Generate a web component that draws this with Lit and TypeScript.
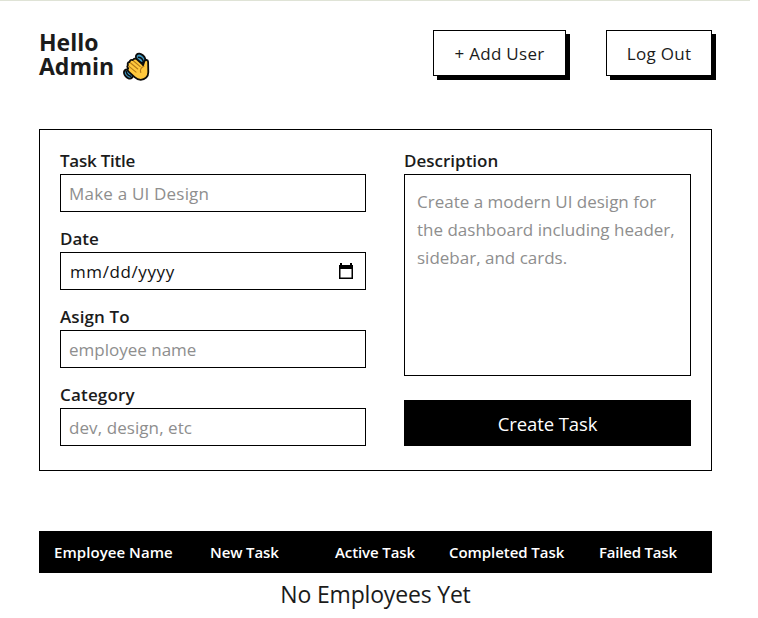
import { LitElement, html, svg, css } from "lit";
import { customElement } from "lit/decorators.js";
import { styleMap } from "lit/directives/style-map.js";

const wave = svg`
  <g fill="#3f9cc6" stroke="#0c0c0c" stroke-width="2">
    <ellipse cx="17.6" cy="5.200" rx="5.300" ry="3.700" transform="rotate(42 17.6 5.200)"/>
    <ellipse cx="5.400" cy="21" rx="5.200" ry="3.600" transform="rotate(48 5.400 21)"/>
  </g>
  <g fill="none" stroke="#0c0c0c" stroke-width="1.500">
    <path d="M14.800 4.200c2.800 0 5 1.800 5.600 4.600M3.200 17.800c.1 3 1.900 5 5 5.600"/>
  </g>
  <path fill="#ffc83d" stroke="#0c0c0c" stroke-width="1.800" stroke-linejoin="round"
    d="M6.600 9c.3-1.900 1.800-2.700 3.400-1.900.9-1.600 2.700-1.800 3.900-.8l5 4.400 1.200 1.500 1.300-4.100c.7-1.700 3.600-1.400 3.700.6l.2 10.500c0 4.600-3.300 7.600-7.600 7.600-2.500 0-4.300-.9-6.100-2.600l-6-5.600c-1.200-1.100-1.300-2.400-.4-3.300-1.300-1.100-1.100-2.500-.2-3.200-.9-1.400-.2-2.800 1.600-3.100z"/>
  <path fill="none" stroke="#b47a17" stroke-width="1.100" stroke-linecap="round"
    d="M10.600 8l6.600 5.600M7.600 10l7.200 6M6 13.400l7 5.800M21 13.200c-3 1-4.200 3.400-3.200 6.300"/>`;

interface Column {
  label: string;
  width: number;
  spacing: number;
}

const columns: Column[] = [
  { label: "Employee Name", width: 156, spacing: 0.06 },
  { label: "New Task", width: 125, spacing: -0.1 },
  { label: "Active Task", width: 114, spacing: -0.1 },
  { label: "Completed Task", width: 150, spacing: -0.06 },
  { label: "Failed Task", width: 100, spacing: -0.2 },
];

@customElement("app-root")
export class AppRoot extends LitElement {
  static styles = css`
    :host {
      display: block;
      height: 618px;
      overflow: hidden;
      background: #fff;
      color: #1b1b1b;
      font-family: "Open Sans", "Noto Sans", sans-serif;
      font-size: 17px;
    }
    * { box-sizing: border-box; }
    .strip { width: 750px; height: 1px; background: #dfe3d6; }
    .page { padding: 29px 46px 0 39px; }
    .header { display: flex; justify-content: space-between; height: 50px; }
    h1 { margin: 0; font-size: 23px; line-height: 24px; font-weight: 700; }
    .line { display: flex; align-items: flex-start; }
    .wave { width: 28px; height: 28px; margin: -1px 0 0 9px; flex: none; overflow: visible; }
    .actions { display: flex; gap: 40px; }
    button {
      font: inherit; color: inherit; margin: 0; padding: 0; height: 46px;
      border: 1px solid #000; background: #fff; white-space: nowrap;
    }
    .action { box-shadow: 4px 4px 0 #000; letter-spacing: 0.3px; }
    .add { width: 133px; }
    .logout { width: 106px; }
    .form {
      display: flex; justify-content: space-between; margin-top: 49px;
      height: 342px; padding: 20px; border: 1px solid #000;
    }
    .left { width: 306px; display: flex; flex-direction: column; gap: 16px; }
    .right { width: 287px; }
    .field { display: block; }
    .label { display: block; height: 24px; line-height: 22px; font-weight: 600; font-size: 17px; }
    input, .date {
      display: flex; align-items: center; justify-content: space-between;
      width: 100%; height: 38px; padding: 0 11px 0 8px; border: 1px solid #000;
      background: #fff; font: inherit; outline: none; border-radius: 0;
    }
    .date { padding-left: 9px; color: #111; }
    .format { letter-spacing: 0.6px; }
    .calendar { width: 16px; height: 18px; flex: none; }
    ::placeholder { color: #8e8e8e; opacity: 1; }
    textarea {
      display: block; width: 100%; height: 202px; margin: 0 0 24px; padding: 13px 12px 12px;
      border: 1px solid #000; resize: none; outline: none; overflow: hidden;
      font: inherit; line-height: 28px; border-radius: 0;
    }
    .create {
      width: 100%; padding-top: 1px; background: #000; color: #fff;
      font-size: 18.5px; letter-spacing: -0.1px;
    }
    .table-head {
      display: flex; align-items: center; height: 42px; margin-top: 60px;
      padding: 0 0 1px 15px; background: #000; color: #fff;
      font-weight: 600; font-size: 15px; white-space: nowrap;
    }
    .empty { text-align: center; font-size: 23px; line-height: 42px; letter-spacing: -0.18px; }
  `;

  private field(label: string, placeholder: string, labelSpacing: number, spacing: number) {
    return html`<label class="field">
      <span class="label" style=${styleMap({ letterSpacing: `${labelSpacing}px` })}>${label}</span>
      <input placeholder=${placeholder} style=${styleMap({ letterSpacing: `${spacing}px` })} />
    </label>`;
  }

  render() {
    return html`
      <div class="strip"></div>
      <div class="page">
        <header class="header">
          <h1>
            <div class="line">Hello</div>
            <div class="line">Admin <svg class="wave" viewBox="0 0 28 28">${wave}</svg></div>
          </h1>
          <div class="actions">
            <button class="action add">+ Add User</button>
            <button class="action logout">Log Out</button>
          </div>
        </header>
        <section class="form">
          <div class="left">
            ${this.field("Task Title", "Make a UI Design", -0.25, 0.2)}
            <div class="field">
              <span class="label">Date</span>
              <div class="date">
                <span class="format">mm/dd/yyyy</span>
                <svg class="calendar" viewBox="0 0 16 18">
                  <path fill="#000" d="M1 3h1V1h2v2h8V1h2v2h1v14H1zM2.500 7v8.500h11V7z" fill-rule="evenodd"/>
                </svg>
              </div>
            </div>
            ${this.field("Asign To", "employee name", 0.1, 0)}
            ${this.field("Category", "dev, design, etc", 0.18, 0.08)}
          </div>
          <div class="right">
            <span class="label">Description</span>
            <textarea placeholder="Create a modern UI design for the dashboard including header, sidebar, and cards."></textarea>
            <button class="create">Create Task</button>
          </div>
        </section>
        <div class="table-head">
          ${columns.map(
            (c) => html`<span style=${styleMap({ width: `${c.width}px`, letterSpacing: `${c.spacing}px` })}>${c.label}</span>`
          )}
        </div>
        <div class="empty">No Employees Yet</div>
      </div>
    `;
  }
}
